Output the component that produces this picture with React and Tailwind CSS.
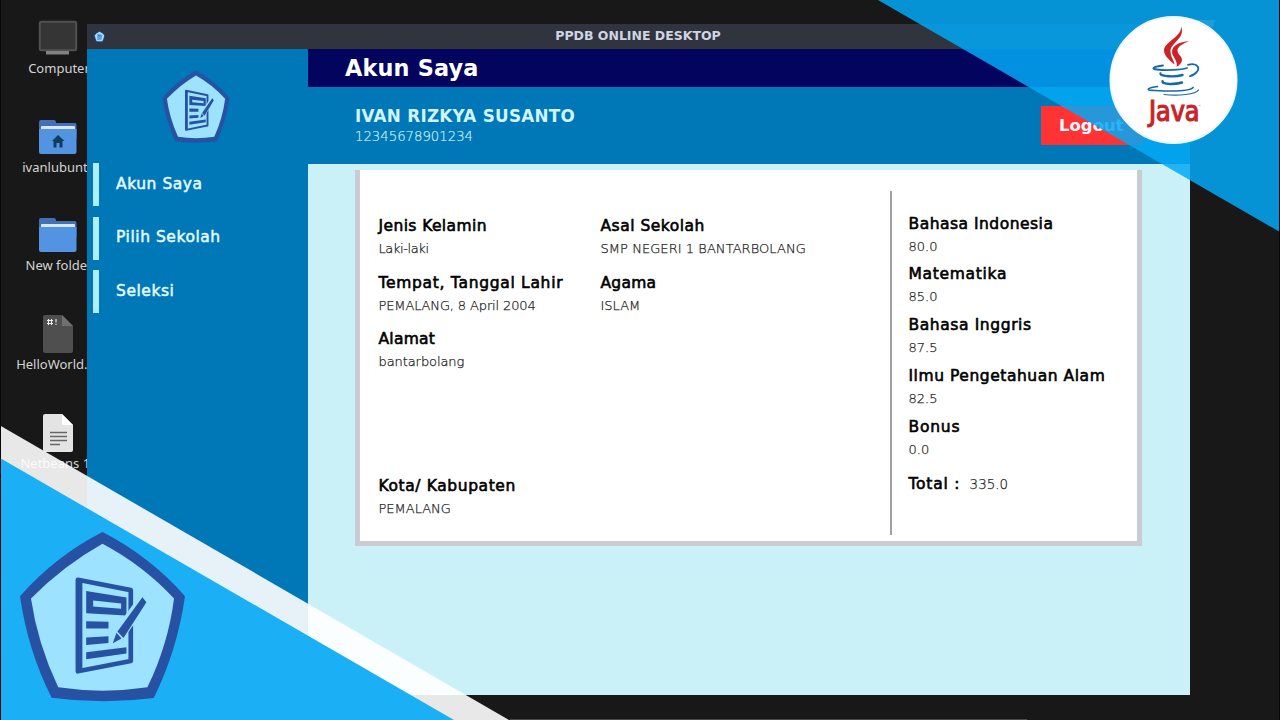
import React from "react";

function Emblem({ className }) {
  return (
    <svg className={className} viewBox="56 92 502 512" preserveAspectRatio="none">
      <path d="M307 95Q450 168 555 287Q532 448 461 592Q308 612 154 591Q82 448 59 287Q168 165 307 95Z" fill="#2752a3" />
      <path d="M307 130Q430 195 522 294Q505 430 442 560Q308 580 174 560Q112 430 92 294Q190 195 307 130Z" fill="#9de2ff" />
      <path d="M233 238L392 269V481L233 512Z" fill="#9de2ff" stroke="#2752a3" strokeWidth="14" strokeLinejoin="round" />
      <path d="M238 244V506" stroke="#2752a3" strokeWidth="17" />
      <path d="M258 272L379 291V345L258 338ZM279 300V318L363 325V309Z" fill="#2752a3" fillRule="evenodd" />
      <path d="M258 362L325 364V384H258ZM258 411L325 407V427L258 433Z" fill="#2752a3" />
      <path d="M427 290L438 306L361 417L338 430L344 399L416 300Z" fill="#9de2ff" stroke="#9de2ff" strokeWidth="14" />
      <path d="M258 455L379 440V459L258 476Z" fill="#2752a3" />
      <path d="M427 290L439 305L370 412L352 393ZM349 397L364 414L338 428Z" fill="#2752a3" />
    </svg>
  );
}

function Folder({ home }) {
  return (
    <svg className="h-[36px] w-[40px]" viewBox="0 0 40 36">
      <path d="M1 3Q1 1 3 1H16Q18 1 18 4H37Q38.500 4 38.500 6V20H1Z" fill="#4570b4" />
      <rect x="3" y="7" width="34" height="8" rx="1" fill="#d9e6fa" />
      <path d="M1 10H38.500V33Q38.500 35 36.500 35H3Q1 35 1 33Z" fill="#5294e2" />
      {home && <path d="M20 16L14 22H15.500V28.500H18.500V24H21.500V28.500H24.500V22H26.500Z" fill="#113c5c" />}
    </svg>
  );
}

function Monitor() {
  return (
    <svg className="h-[36px] w-[40px]" viewBox="0 0 40 36">
      <rect x="1.800" y="1.800" width="36.400" height="28.400" rx="1.500" fill="#353535" stroke="#515151" strokeWidth="2" />
      <path d="M8 31H31V34.500H8Z" fill="#828282" />
    </svg>
  );
}

function Script() {
  return (
    <svg className="h-[40px] w-[40px]" viewBox="0 0 40 40">
      <path d="M5 3Q5 1 7 1H24L35 12V37Q35 39 33 39H7Q5 39 5 37Z" fill="#4f4f4f" />
      <path d="M24 1L35 12H24Z" fill="#707070" />
      <path d="M10.500 5V11M13.500 5V11M9 6.500H15M9 9.500H15M18 5V8.500M18 9.700V11" stroke="#eee" strokeWidth="1.100" />
    </svg>
  );
}

function Document() {
  return (
    <svg className="h-[40px] w-[40px]" viewBox="0 0 40 40">
      <path d="M5 3Q5 1 7 1H24L35 12V37Q35 39 33 39H7Q5 39 5 37Z" fill="#e4e4e4" />
      <path d="M24 1L35 12H24Z" fill="#fff" />
      <path d="M12 19.500H29M12 23.500H29M12 27.500H29M12 31.500H22" stroke="#666" strokeWidth="1.600" />
    </svg>
  );
}

function DesktopItem({ className, gap = "mt-[3px]", icon, children }) {
  return (
    <div className={"absolute left-[8px] flex w-[100px] flex-col items-center font-['Noto_Sans'] text-[13px] leading-[18px] text-[#d4d4d4] " + className}>
      {icon}
      <span className={"whitespace-nowrap pl-[2px] " + gap}>{children}</span>
    </div>
  );
}

function MenuItem({ children }) {
  return (
    <div className="flex h-[43px] items-center border-l-[6px] border-[#aeeeff] pl-[17px] text-[15.5px] tracking-[0.55px] text-[#e4fbff] [-webkit-text-stroke:0.5px_#e4fbff]">
      {children}
    </div>
  );
}

function Field({ label, value, labelClass = "tracking-[0.5px]", valueClass = "" }) {
  return (
    <div className="whitespace-nowrap">
      <div className={"text-[15.5px] leading-[23px] text-black [-webkit-text-stroke:0.6px_#000] " + labelClass}>{label}</div>
      <div className={"text-[13px] font-extralight leading-[22px] text-[#222] [-webkit-text-stroke:0.25px_#222] " + valueClass}>{value}</div>
    </div>
  );
}

function JavaBadge() {
  return (
    <svg className="absolute left-[1109px] top-[15px] h-[130px] w-[130px]" viewBox="1109 15 130 130">
      <circle cx="1173.500" cy="80" r="63" fill="#fff" stroke="#edf8fe" strokeWidth="2" />
      <path d="M1181.300 26.500C1185.500 38.500 1170.500 43 1170.500 51C1170.500 57 1174 60 1174.500 64.500C1168 59 1164 55 1164 50.500C1164 42 1181.500 37 1181.300 26.500Z" fill="#cc2328" />
      <path d="M1189 41C1182 44 1177.500 47 1177.500 50.500C1177.500 54.500 1182 56 1182 60C1182 63 1179.500 65 1176.500 66.800C1178.500 61 1172 57 1172 52C1172 45 1180 42 1189 41Z" fill="#cc2328" />
      <g fill="none" stroke="#1768a6" strokeLinecap="round">
        <path d="M1163 65.500C1152 67 1151 69 1157 69.500C1166 70.600 1180 70 1187 68" strokeWidth="1.800" />
        <path d="M1188 64.800C1196 62.500 1200 67 1197.500 71C1195.500 74 1192.500 75.500 1190 76.200" strokeWidth="1.800" />
        <path d="M1160.500 73.500C1160 76.800 1176 77.200 1182.500 75" strokeWidth="2.400" />
        <path d="M1162.500 81.200C1162 84.800 1175 84.600 1182 82.500" strokeWidth="2.400" />
        <path d="M1157.500 86.500C1149 87.500 1143 90.500 1155 90.500C1173 91.500 1190 91 1193 87.500" strokeWidth="1.700" />
        <path d="M1164 94.500C1178 96 1196 94.500 1198.500 90" strokeWidth="1.200" />
      </g>
      <text x="1149" y="121" textLength="50.5" lengthAdjust="spacingAndGlyphs" fontFamily="DejaVu Sans Condensed, DejaVu Sans, sans-serif" fontSize="27.5" fill="#c8242a" stroke="#c8242a" strokeWidth="1.200">
        Java
      </text>
      <path d="M1198.500 105.500H1200.500" stroke="#d88" strokeWidth="0.700" />
    </svg>
  );
}

export default function App() {
  return (
    <div className="relative h-[720px] w-[1280px] overflow-hidden bg-[#181818] font-['DejaVu_Sans',sans-serif]">
      <DesktopItem className="top-[20px]" icon={<Monitor />}>Computer</DesktopItem>
      <DesktopItem className="top-[119px]" icon={<Folder home />}>ivanlubuntu</DesktopItem>
      <DesktopItem className="top-[217px]" icon={<Folder />}>New folder</DesktopItem>
      <DesktopItem className="top-[314px]" gap="mt-[1px]" icon={<Script />}>HelloWorld.sh</DesktopItem>
      <DesktopItem className="top-[413px]" gap="mt-[1px]" icon={<Document />}>Netbeans 12</DesktopItem>

      <div className="absolute left-[87px] top-[24px] flex h-[671px] w-[1103px] flex-col overflow-hidden">
        <div className="flex h-[25px] shrink-0 items-center bg-[#2f343f] pl-[7px]">
          <Emblem className="h-[11px] w-[11px]" />
          <span className="w-[1066px] text-center text-[12.5px] font-bold leading-none text-[#d0d5e2]">PPDB ONLINE DESKTOP</span>
        </div>
        <div className="flex min-h-0 flex-1">
          <aside className="flex w-[221px] shrink-0 flex-col bg-[#0077b6]">
            <Emblem className="ml-[75px] mt-[21px] h-[73px] w-[68px]" />
            <nav className="ml-[6px] mt-[20px] flex flex-col gap-[10.500px]">
              <MenuItem>Akun Saya</MenuItem>
              <MenuItem>Pilih Sekolah</MenuItem>
              <MenuItem>Seleksi</MenuItem>
            </nav>
          </aside>
          <main className="flex flex-1 flex-col bg-[#caf0f8]">
            <h1 className="flex h-[38px] items-center bg-[#03045e] pl-[37px] pt-[1px] text-[22.4px] font-bold tracking-[0.15px] text-white">Akun Saya</h1>
            <header className="flex h-[77px] items-center justify-between bg-[#0077b6] pl-[47px] pr-[47px]">
              <div className="pt-[1.500px]">
                <div className="text-[16.8px] font-bold leading-[21px] tracking-[0.25px] text-[#d0f5ff]">IVAN RIZKYA SUSANTO</div>
                <div className="text-[13.25px] font-extralight leading-[19px] text-[#caf0f8] [-webkit-text-stroke:0.2px_#caf0f8]">12345678901234</div>
              </div>
              <button className="h-[39px] w-[102px] bg-[#ff3333] pl-[18px] pt-[1px] text-left text-[16.5px] font-bold text-[#e8f8fc]">Logout</button>
            </header>
            <section className="ml-[47px] mt-[6px] flex h-[376px] w-[787px] border-x-[5px] border-b-[5px] border-[#caccd1] bg-white">
              <div className="flex w-[530px] flex-col justify-between pb-[21px] pl-[18.500px] pt-[45px]">
                <div className="grid grid-cols-[222px_1fr] gap-y-[11.500px]">
                  <Field label="Jenis Kelamin" value="Laki-laki" labelClass="tracking-[0.4px]" valueClass="tracking-[-0.4px]" />
                  <Field label="Asal Sekolah" value="SMP NEGERI 1 BANTARBOLANG" valueClass="tracking-[0.06px]" />
                  <Field label="Tempat, Tanggal Lahir" value="PEMALANG, 8 April 2004" labelClass="tracking-[0.7px]" valueClass="tracking-[-0.13px]" />
                  <Field label="Agama" value="ISLAM" labelClass="tracking-[0.25px]" />
                  <Field label="Alamat" value="bantarbolang" labelClass="tracking-[0.25px]" valueClass="tracking-[-0.08px]" />
                </div>
                <Field label="Kota/ Kabupaten" value="PEMALANG" labelClass="tracking-[0.6px]" />
              </div>
              <div className="mt-[21px] flex h-[344px] flex-col gap-[5.800px] border-l-2 border-[#a0a0a0] pl-[16.500px] pt-[21.500px]">
                <Field label="Bahasa Indonesia" value="80.0" />
                <Field label="Matematika" value="85.0" labelClass="tracking-[0.7px]" />
                <Field label="Bahasa Inggris" value="87.5" labelClass="tracking-[0.6px]" />
                <Field label="Ilmu Pengetahuan Alam" value="82.5" labelClass="tracking-[0.55px]" />
                <Field label="Bonus" value="0.0" labelClass="tracking-[0.8px]" />
                <div className="mt-[6.500px] flex items-baseline gap-[9.500px] leading-[22px]">
                  <span className="text-[15.5px] tracking-[0.75px] text-black [-webkit-text-stroke:0.6px_#000]">Total :</span>
                  <span className="text-[13.4px] font-extralight text-[#222] [-webkit-text-stroke:0.25px_#222]">335.0</span>
                </div>
              </div>
            </section>
          </main>
        </div>
      </div>

      <svg className="absolute left-0 top-0 h-[720px] w-[1280px]" viewBox="0 0 1280 720">
        <path d="M510 719.500H1027" stroke="#4a4a4a" />
        <path d="M878 0H1280V232Z" fill="#02a9f7" fillOpacity="0.85" />
        <path d="M1190 20H1215L1213 27H1190Z" fill="#1c9edb" />
        <path d="M0 425.500L509 720H0Z" fill="#fff" fillOpacity="0.9" />
        <path d="M0 458L454 720H0Z" fill="#1bb0f5" />
        <path d="M0.500 0V720M1279.500 0V720" stroke="#05070a" />
      </svg>
      <Emblem className="absolute left-[19px] top-[531px] h-[171px] w-[167px]" />
      <JavaBadge />
    </div>
  );
}
